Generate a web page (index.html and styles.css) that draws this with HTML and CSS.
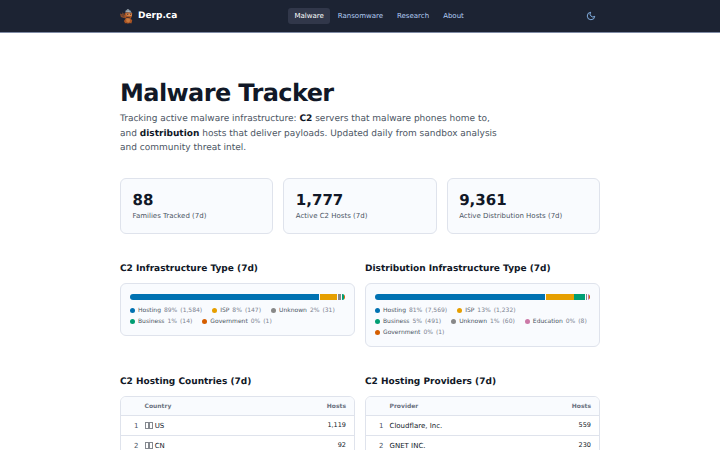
FILE: index.html
```html
<!DOCTYPE html>
<html lang="en">
<head>
  <meta charset="UTF-8">
  <meta name="viewport" content="width=device-width, initial-scale=1.0">
  <title>Malware Tracker - Derp.ca</title>
  <link rel="stylesheet" href="styles.css">
</head>
<body>

<header class="site-header">
  <div class="header-inner">
    <a class="brand" href="#">
      <svg class="logo" viewBox="0 0 32 36">
        <path d="M10 22 2 19 0 11l5 2 1-5 4 6 4 4z" fill="#8a4e2d"/>
        <path d="M3 14l5 4M6 11l4 7" stroke="#493634" stroke-width="1.5"/>
        <path d="M11 10q8-5 17 0l-1 9-3 3 4 5-2 7H12l-3-6 4-6-3-4z" fill="#a95424"/>
        <path d="M15 22l7 0 1 7-4 3-5-3z" fill="#c9793d"/>
        <path d="M14 11h13v6h-5l-7-1z" fill="#d38a50"/>
        <path d="M12 9l1-5 5-3 6 3 3 6-8-2z" fill="#748492"/>
        <path d="M18 1l1 7M13 6l11 1" stroke="#b4bdc3" stroke-width="1.5"/>
        <path d="M16 13h3M23 13h2M14 20l9 1M10 34h6M20 34h6" stroke="#332a30" stroke-width="2"/>
      </svg>
      <span>Derp.ca</span>
    </a>
    <nav class="nav">
      <a class="active" href="#">Malware</a>
      <a href="#">Ransomware</a>
      <a href="#">Research</a>
      <a href="#">About</a>
    </nav>
    <button class="theme-toggle" aria-label="Toggle theme">
      <svg viewBox="0 0 24 24"><path d="M21 12.8A9 9 0 1 1 11.2 3a7 7 0 0 0 9.8 9.8z"/></svg>
    </button>
  </div>
</header>

<main class="container">
  <h1>Malware Tracker</h1>
  <p class="lead">Tracking active malware infrastructure: <strong>C2</strong> servers that malware phones home to,<br>and <strong>distribution</strong> hosts that deliver payloads. Updated daily from sandbox analysis<br>and community threat intel.</p>

  <section class="stats">
    <div class="stat-card"><b>88</b><span>Families Tracked (7d)</span></div>
    <div class="stat-card"><b>1,777</b><span>Active C2 Hosts (7d)</span></div>
    <div class="stat-card"><b>9,361</b><span>Active Distribution Hosts (7d)</span></div>
  </section>

  <section class="columns">
    <div>
      <h2>C2 Infrastructure Type (7d)</h2>
      <div class="infra-card">
        <div class="bar">
          <i class="hosting" style="flex-grow: 1584"></i>
          <i class="isp" style="flex-grow: 147"></i>
          <i class="unknown" style="flex-grow: 31"></i>
          <i class="business" style="flex-grow: 14"></i>
          <i class="government" style="flex-grow: 1"></i>
        </div>
        <ul class="legend">
          <li><i class="hosting"></i>Hosting <span>89%</span> <span>(1,584)</span></li>
          <li><i class="isp"></i>ISP <span>8%</span> <span>(147)</span></li>
          <li><i class="unknown"></i>Unknown <span>2%</span> <span>(31)</span></li>
          <li><i class="business"></i>Business <span>1%</span> <span>(14)</span></li>
          <li><i class="government"></i>Government <span>0%</span> <span>(1)</span></li>
        </ul>
      </div>
    </div>
    <div>
      <h2>Distribution Infrastructure Type (7d)</h2>
      <div class="infra-card">
        <div class="bar">
          <i class="hosting" style="flex-grow: 7569"></i>
          <i class="isp" style="flex-grow: 1232"></i>
          <i class="business" style="flex-grow: 491"></i>
          <i class="unknown" style="flex-grow: 60"></i>
          <i class="education" style="flex-grow: 8"></i>
          <i class="government" style="flex-grow: 1"></i>
        </div>
        <ul class="legend">
          <li><i class="hosting"></i>Hosting <span>81%</span> <span>(7,569)</span></li>
          <li><i class="isp"></i>ISP <span>13%</span> <span>(1,232)</span></li>
          <li><i class="business"></i>Business <span>5%</span> <span>(491)</span></li>
          <li><i class="unknown"></i>Unknown <span>1%</span> <span>(60)</span></li>
          <li><i class="education"></i>Education <span>0%</span> <span>(8)</span></li>
          <li><i class="government"></i>Government <span>0%</span> <span>(1)</span></li>
        </ul>
      </div>
    </div>
  </section>

  <section class="columns tables">
    <div>
      <h2>C2 Hosting Countries (7d)</h2>
      <div class="table-wrap">
        <table>
          <thead><tr><th class="rank"></th><th>Country</th><th class="num">Hosts</th></tr></thead>
          <tbody>
            <tr><td class="rank">1</td><td><span class="flag"><i></i><i></i></span> US</td><td class="num">1,119</td></tr>
            <tr><td class="rank">2</td><td><span class="flag"><i></i><i></i></span> CN</td><td class="num">92</td></tr>
          </tbody>
        </table>
      </div>
    </div>
    <div>
      <h2>C2 Hosting Providers (7d)</h2>
      <div class="table-wrap">
        <table>
          <thead><tr><th class="rank"></th><th>Provider</th><th class="num">Hosts</th></tr></thead>
          <tbody>
            <tr><td class="rank">1</td><td>Cloudflare, Inc.</td><td class="num">559</td></tr>
            <tr><td class="rank">2</td><td>GNET INC.</td><td class="num">230</td></tr>
          </tbody>
        </table>
      </div>
    </div>
  </section>
</main>

</body>
</html>
```
FILE: styles.css
```css
* {
  box-sizing: border-box;
}
html {
  overflow: hidden;
}
body {
  margin: 0;
  height: 450px;
  overflow: hidden;
  font-family: "DejaVu Sans", sans-serif;
  font-size: 7px;
  line-height: 1.5;
  color: #111827;
  background: #fff;
  text-rendering: geometricPrecision;
}
a {
  color: inherit;
  text-decoration: none;
}
/* Header */
.site-header {
  height: 33px;
  background: #1c2333;
  border-bottom: 1px solid #7f8ba5;
}
.header-inner {
  display: flex;
  justify-content: space-between;
  align-items: center;
  width: 480px;
  height: 32px;
  margin: 0 auto;
}
.brand {
  display: flex;
  align-items: center;
  gap: 4px;
  font-size: 9px;
  font-weight: bold;
  color: #fff;
}
.brand span {
  padding-top: 1px;
}
.logo {
  width: 14px;
  height: 17px;
}
.nav {
  display: flex;
  gap: 2px;
  color: #b3cdf3;
}
.nav a {
  padding: 3px 6px;
  line-height: 10px;
  border-radius: 3px;
}
.nav .active {
  color: #fff;
  background: #31374a;
}
.theme-toggle {
  display: flex;
  padding: 4px 4px 4px 5px;
  border: none;
  background: none;
}
.theme-toggle svg {
  width: 10px;
  height: 10px;
  fill: none;
  stroke: #93c5fd;
  stroke-width: 2;
  stroke-linejoin: round;
}
/* Intro */
.container {
  width: 480px;
  margin: 0 auto;
  padding-top: 45px;
}
h1 {
  margin: 0;
  font-size: 24px;
  line-height: 30px;
  letter-spacing: -0.025em;
}
.lead {
  margin: 4px 0 0;
  font-size: 9px;
  line-height: 14.625px;
  color: #4b5563;
}
.lead strong {
  color: #111827;
}
/* Stats */
.stats {
  display: grid;
  grid-template-columns: repeat(3, 1fr);
  gap: 10px;
  margin-top: 22px;
}
.stat-card {
  height: 56px;
  padding: 11px 11.5px;
  background: #f9fbfe;
  border: 1px solid #dfe3ec;
  border-radius: 6px;
}
.stat-card b {
  display: block;
  font-size: 15px;
  line-height: 20px;
}
.stat-card span {
  display: block;
  margin-top: 1px;
  line-height: 11px;
  color: #4b5563;
}
/* Infrastructure type */
.columns {
  display: grid;
  grid-template-columns: 1fr 1fr;
  align-items: start;
  gap: 10px;
  margin-top: 28px;
}
h2 {
  margin: 0 0 7px;
  font-size: 9px;
  line-height: 14px;
}
.infra-card {
  padding: 10px 9px 8px;
  background: #f9fbfe;
  border: 1px solid #dfe3ec;
  border-radius: 6px;
}
.bar {
  display: flex;
  gap: 0.5px;
  height: 6px;
  border-radius: 3px;
  overflow: hidden;
}
.bar i {
  flex: 0 1 0;
  min-width: 1px;
}
.legend {
  display: flex;
  flex-wrap: wrap;
  column-gap: 10px;
  margin: 5px 0 0;
  padding: 0;
  list-style: none;
  font-size: 6px;
  line-height: 11px;
  color: #4b5563;
}
.legend li {
  display: flex;
  align-items: center;
  gap: 3px;
}
.legend span {
  color: #7b8290;
}
.legend i {
  width: 5px;
  height: 5px;
  border-radius: 50%;
}
.hosting {
  background: #0072b2;
}
.isp {
  background: #e69f00;
}
.unknown {
  background: #888;
}
.business {
  background: #009e73;
}
.education {
  background: #cc79a7;
}
.government {
  background: #d55e00;
}
/* Tables */
.table-wrap {
  overflow: hidden;
  border: 1px solid #dfe3ec;
  border-radius: 6px;
}
table {
  width: 100%;
  border-collapse: collapse;
}
th,
td {
  height: 20px;
  padding: 0;
  text-align: left;
  border-bottom: 1px solid #dfe3ec;
}
th {
  height: 19px;
  font-size: 6px;
  color: #6b7280;
  background: #f9fbfe;
}
.rank {
  width: 23.5px;
  padding-right: 6px;
  text-align: right;
  color: #4b5563;
}
.num {
  padding-right: 8px;
  text-align: right;
}
td.num {
  font-size: 6.5px;
}
.flag {
  display: inline-flex;
  vertical-align: -1px;
}
.flag i {
  width: 4px;
  height: 7px;
  border: 1px solid #85898f;
}
```
